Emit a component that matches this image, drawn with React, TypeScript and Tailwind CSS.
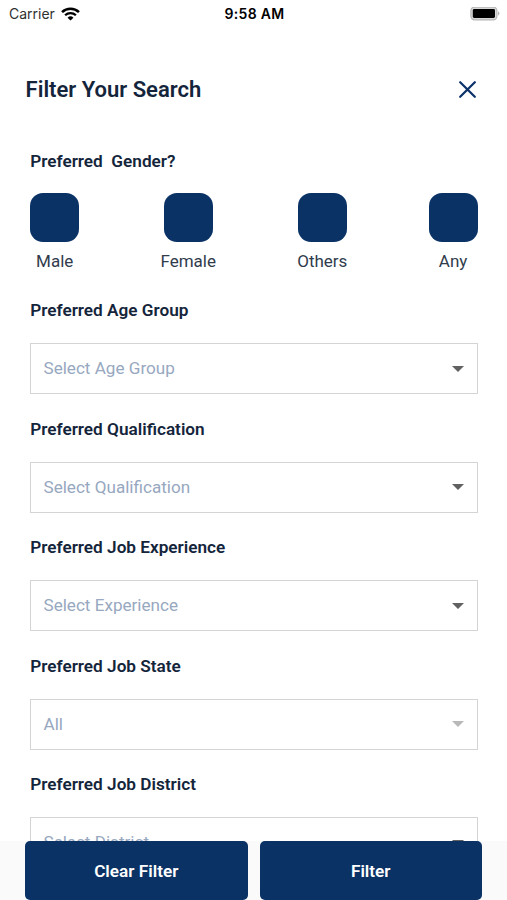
//src/App.tsx
const genders = ["Male", "Female", "Others", "Any"];

const fields = [
  { label: "Preferred Age Group", placeholder: "Select Age Group" },
  { label: "Preferred Qualification", placeholder: "Select Qualification" },
  { label: "Preferred Job Experience", placeholder: "Select Experience" },
  { label: "Preferred Job State", placeholder: "All", disabled: true },
  { label: "Preferred Job District", placeholder: "Select District" },
];

const StatusBar = () => (
  <div className="grid h-[27px] shrink-0 grid-cols-3 items-center pl-[9px] pr-[7px] font-['Inter',sans-serif] text-black">
    <div className="flex items-center gap-[6px]">
      <span className="text-[14px] text-[#303030]">Carrier</span>
      <svg width="19" height="14" viewBox="0 0 18 14" preserveAspectRatio="none" fill="none" stroke="currentColor">
        <path d="M1 5.1a11.4 11.4 0 0 1 16 0" strokeWidth="2.4" />
        <path d="M3.9 8.3a7.3 7.3 0 0 1 10.2 0" strokeWidth="2.2" />
        <path d="M9 13.6L6.2 10.7a4 4 0 0 1 5.6 0z" fill="currentColor" stroke="none" />
      </svg>
    </div>
    <span className="text-center text-[14px] font-semibold tracking-[0.3px]">9:58 AM</span>
    <svg className="justify-self-end" width="30" height="14" viewBox="0 0 30 14">
      <rect x="0.9" y="0.2" width="26" height="12.6" rx="3.6" fill="#d8d8d8" stroke="#b5b5b5" strokeWidth="1.2" />
      <rect x="2.8" y="2" width="22.2" height="9" rx="1.4" fill="#000" />
      <path d="M28 4.3a2.4 2.4 0 0 1 0 4.4z" fill="#b5b5b5" />
    </svg>
  </div>
);

const SelectField = ({
  label,
  placeholder,
  disabled = false,
}: {
  label: string;
  placeholder: string;
  disabled?: boolean;
}) => (
  <div className="h-[118.5px] shrink-0">
    <h3 className="text-[17.2px] font-semibold leading-5 text-[#14253b]">{label}</h3>
    <button
      disabled={disabled}
      className="mt-[23px] flex h-[51px] w-full items-center justify-between border border-[#d4d4d4] pl-[12.3px] pr-[13px] text-left"
    >
      <span className="pt-px text-[17.1px] text-[#97a8bf]">{placeholder}</span>
      <svg
        width="12"
        height="6"
        viewBox="0 0 12 6"
        className={disabled ? "text-[#b9b9b9]" : "text-[#616161]"}
      >
        <path d="M0 0h12L6 6z" fill="currentColor" />
      </svg>
    </button>
  </div>
);

const App = () => {
  return (
    <div className="flex h-screen flex-col overflow-hidden bg-white font-['Roboto',sans-serif]">
      <StatusBar />

      <header className="mt-[46px] flex h-8 shrink-0 items-center justify-between pl-[25.6px] pr-[31px]">
        <h1 className="text-[22px] font-semibold text-[#14253b]">Filter Your Search</h1>
        <button aria-label="Close">
          <svg width="17" height="17" viewBox="0 0 17 17" stroke="#0a3268" strokeWidth="2.2" strokeLinecap="round">
            <path d="M1.2 1.2l14.6 14.6M15.8 1.2L1.2 15.8" />
          </svg>
        </button>
      </header>

      <main className="flex min-h-0 flex-1 flex-col overflow-hidden pl-[30.2px] pr-[29.4px] pt-[46px]">
        <h3 className="shrink-0 whitespace-pre text-[17.2px] font-semibold leading-5 text-[#14253b]">
          {"Preferred  Gender?"}
        </h3>
        <div className="mt-[21.6px] flex shrink-0 justify-between">
          {genders.map((gender) => (
            <div key={gender} className="flex flex-col items-center">
              <button aria-label={gender} className="size-[49px] rounded-[13px] bg-[#0a3265]" />
              <span className="mt-[9.4px] text-[17px] leading-5 text-[#303c4c]">{gender}</span>
            </div>
          ))}
        </div>

        <div className="mt-[29.2px] flex flex-col">
          {fields.map((field) => (
            <SelectField key={field.label} {...field} />
          ))}
        </div>
      </main>

      <footer className="flex h-[59px] shrink-0 gap-3 bg-[#fafafa] px-[25px] text-[17.2px] font-semibold text-white">
        <button className="flex-1 rounded-[5px] bg-[#0a3265] pt-[2px]">Clear Filter</button>
        <button className="flex-1 rounded-[5px] bg-[#0a3265] pt-[2px]">Filter</button>
      </footer>
    </div>
  );
};

export default App;
